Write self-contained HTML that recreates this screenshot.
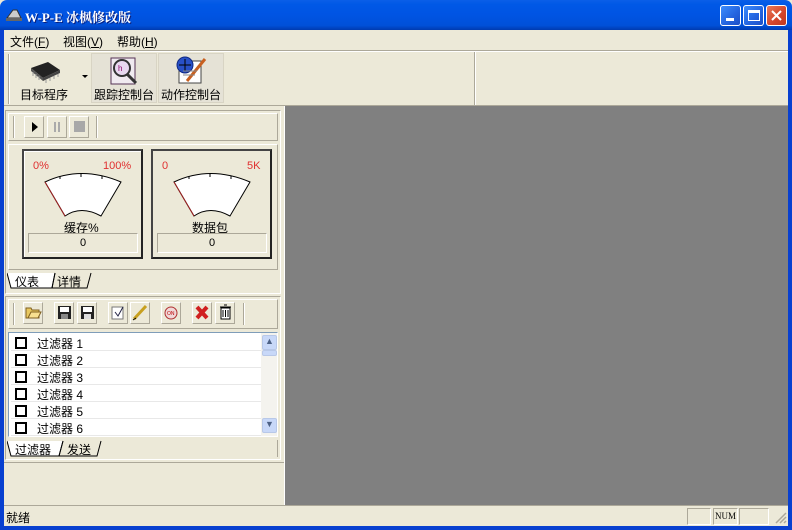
<!DOCTYPE html>
<html><head><meta charset="utf-8"><style>
*{margin:0;padding:0;box-sizing:border-box}
body{width:792px;height:530px;overflow:hidden;background:#ece9d8;font:12px "Liberation Sans","Noto Sans CJK SC",sans-serif;position:relative;color:#000}
.a{position:absolute}
.title{left:0;top:0;width:792px;height:30px;background:linear-gradient(#0a5fe8,#0058e6 15%,#0054e3 50%,#0050d8 85%,#003bb0);border-radius:7px 7px 0 0}
.tt{left:25px;top:7px;color:#fff;font-weight:bold;font-size:13px;font-family:"Liberation Serif","Noto Serif CJK SC",serif;text-shadow:1px 1px #0a1e7a}
.wb{top:5px;width:21px;height:21px;border:1px solid #fff;border-radius:3px;background:linear-gradient(135deg,#3c8cfc,#2463de 60%,#1d4fc6)}
.frL{left:0;top:30px;width:4px;height:500px;background:#0840d0}
.frR{left:788px;top:30px;width:4px;height:500px;background:#0840d0}
.frB{left:0;top:526px;width:792px;height:4px;background:#0840d0}
.menu span{position:absolute;top:33px}
.sunk{border:1px solid;border-color:#aca899 #fff #fff #aca899}
.rais{border:1px solid;border-color:#fff #aca899 #aca899 #fff}
.btn{position:absolute;width:20px;height:22px;border:1px solid;border-color:#fff #aca899 #aca899 #fff}
.row{position:absolute;left:2px;width:250px;height:17px;border-bottom:1px solid #e8e8e8}
.row i{position:absolute;left:4px;top:3px;width:12px;height:12px;border:2px solid #000}
.row b{position:absolute;left:26px;top:1px;font-weight:normal;font-size:12px}
.red{color:#e03030;font-size:11px}
</style></head><body>
<div class="a title"></div>
<svg class="a" style="left:5px;top:6px" width="18" height="16"><path d="M2 12 L8 4 L12 4 L16 12Z" fill="#ccc" stroke="#333"/><rect x="1" y="12" width="16" height="3" fill="#666"/></svg>
<div class="a tt">W-P-E 冰枫修改版</div>
<div class="a wb" style="left:720px"><div class="a" style="left:5px;top:12px;width:8px;height:3px;background:#fff"></div></div>
<div class="a wb" style="left:743px"><div class="a" style="left:4px;top:4px;width:12px;height:11px;border:1px solid #fff;border-top:3px solid #fff"></div></div>
<div class="a wb" style="left:766px;background:linear-gradient(135deg,#e87a5a,#d4452a 60%,#c03a20)"><svg width="19" height="19"><path d="M5 5L14 14M14 5L5 14" stroke="#fff" stroke-width="2"/></svg></div>
<div class="a frL"></div><div class="a frR"></div><div class="a frB"></div>
<div class="menu"><span style="left:10px">文件(<u>F</u>)</span><span style="left:63px">视图(<u>V</u>)</span><span style="left:117px">帮助(<u>H</u>)</span></div>
<div class="a" style="left:4px;top:50px;width:784px;height:1px;background:#aca899"></div>
<div class="a" style="left:4px;top:51px;width:784px;height:1px;background:#fff"></div>
<!-- toolbar -->
<div class="a" style="left:8px;top:54px;width:2px;height:50px;border-left:1px solid #aca899;border-right:1px solid #fff"></div>
<svg class="a" style="left:28px;top:58px" width="34" height="26"><path d="M3 10 L20 4 L32 12 L15 20Z" fill="#222"/><path d="M3 10 L15 20 L15 23 L3 13Z" fill="#555"/><path d="M15 20L32 12L32 15L15 23Z" fill="#444"/><g stroke="#999" stroke-width="1"><path d="M5 14v4M8 16v4M11 18v4M18 22v3M22 20v3M26 18v3M30 16v3"/></g></svg>
<div class="a" style="left:20px;top:86px">目标程序</div>
<div class="a" style="left:82px;top:75px;width:0;height:0;border:3px solid transparent;border-top:3px solid #000"></div>
<div class="a" style="left:91px;top:53px;width:66px;height:50px;background:#e5e2d6;border:1px solid #d8d4c4"></div>
<div class="a" style="left:158px;top:53px;width:66px;height:50px;background:#e5e2d6;border:1px solid #d8d4c4"></div>
<svg class="a" style="left:108px;top:55px" width="32" height="32"><rect x="3" y="3" width="24" height="26" fill="#f0eaf0" stroke="#553355"/><circle cx="14" cy="13" r="8" fill="#e8d8f0" stroke="#333" stroke-width="2"/><path d="M19 19L28 28" stroke="#333" stroke-width="3"/><text x="10" y="16" font-size="8" fill="#806">h</text></svg>
<div class="a" style="left:94px;top:86px">跟踪控制台</div>
<svg class="a" style="left:173px;top:55px" width="34" height="32"><rect x="6" y="6" width="22" height="22" fill="#fff" stroke="#444"/><circle cx="12" cy="10" r="8" fill="#2850c8" stroke="#102880"/><path d="M12 4v12M6 10h12" stroke="#000"/><path d="M14 26L32 4" stroke="#c86020" stroke-width="3"/><path d="M10 16h14M10 20h12" stroke="#888"/></svg>
<div class="a" style="left:161px;top:86px">动作控制台</div>
<div class="a" style="left:474px;top:52px;width:2px;height:54px;border-left:1px solid #aca899;border-right:1px solid #fff"></div>
<div class="a" style="left:4px;top:105px;width:784px;height:1px;background:#aca899"></div>
<!-- gray area -->
<div class="a" style="left:284px;top:106px;width:504px;height:400px;background:#808080;border-left:1px solid #fff"></div>
<!-- left panel 1 -->
<div class="a sunk" style="left:5px;top:110px;width:276px;height:184px"></div>
<div class="a rais" style="left:8px;top:113px;width:270px;height:28px"></div>
<div class="a" style="left:13px;top:116px;width:2px;height:22px;border-left:1px solid #aca899;border-right:1px solid #fff"></div>
<div class="btn" style="left:24px;top:116px"><div class="a" style="left:7px;top:5px;border:5px solid transparent;border-left:6px solid #000;border-right:0"></div></div>
<div class="btn" style="left:47px;top:116px"><div class="a" style="left:6px;top:5px;width:6px;height:10px;border-left:2px solid #aaa;border-right:2px solid #aaa"></div></div>
<div class="btn" style="left:69px;top:116px"><div class="a" style="left:4px;top:4px;width:11px;height:11px;background:#a8a8a8"></div></div>
<div class="a" style="left:96px;top:116px;width:2px;height:22px;border-left:1px solid #aca899;border-right:1px solid #fff"></div>
<div class="a rais" style="left:8px;top:144px;width:270px;height:126px"></div>
<!-- gauges -->
<div class="a" style="left:22px;top:149px;width:121px;height:110px;border:2px solid #333;border-color:#444 #222 #222 #444;box-shadow:1px 1px 0 #fff inset"></div>
<div class="a red" style="left:33px;top:160px">0%</div><div class="a red" style="left:103px;top:160px">100%</div>
<svg class="a" style="left:22px;top:149px" width="121" height="110"><path d="M23 33 Q59 16 99 33 L79 67 Q59 56 43 67Z" fill="#fff" stroke="#000"/><path d="M23 33L43 67" stroke="#a02020"/><path d="M38 27v3M59 24v4M80 27v3" stroke="#000"/></svg>
<div class="a" style="left:64px;top:219px">缓存%</div>
<div class="a sunk" style="left:28px;top:233px;width:110px;height:20px;text-align:center;line-height:18px;font-size:11px">0</div>
<div class="a" style="left:151px;top:149px;width:121px;height:110px;border:2px solid #333;border-color:#444 #222 #222 #444"></div>
<div class="a red" style="left:162px;top:160px">0</div><div class="a red" style="left:247px;top:160px">5K</div>
<svg class="a" style="left:151px;top:149px" width="121" height="110"><path d="M23 33 Q59 16 99 33 L79 67 Q59 56 43 67Z" fill="#fff" stroke="#000"/><path d="M23 33L43 67" stroke="#a02020"/><path d="M38 27v3M59 24v4M80 27v3" stroke="#000"/></svg>
<div class="a" style="left:192px;top:219px">数据包</div>
<div class="a sunk" style="left:157px;top:233px;width:110px;height:20px;text-align:center;line-height:18px;font-size:11px">0</div>
<svg class="a" style="left:7px;top:272px" width="90" height="18"><path d="M0 1 L4 16 L45 16 L48 1" fill="#fff" stroke="#000"/><path d="M45 16 L48 1 M45 16 L80 16 L84 1" fill="none" stroke="#000"/><text x="8" y="14" font-size="12" font-family="Noto Sans CJK SC">仪表</text><text x="50" y="14" font-size="12" font-family="Noto Sans CJK SC">详情</text></svg>
<!-- panel 2 -->
<div class="a sunk" style="left:5px;top:296px;width:276px;height:164px"></div>
<div class="a rais" style="left:8px;top:299px;width:270px;height:30px"></div>
<div class="a" style="left:13px;top:303px;width:2px;height:22px;border-left:1px solid #aca899;border-right:1px solid #fff"></div>
<div class="btn" style="left:23px;top:302px"><svg width="18" height="18"><path d="M2 5h5l1 2h7v8H2Z" fill="#e8c860" stroke="#806020"/><path d="M4 15l3-6h10l-3 6Z" fill="#f8e090" stroke="#806020"/></svg></div>
<div class="btn" style="left:54px;top:302px"><svg width="18" height="18"><rect x="3" y="3" width="13" height="13" fill="#222"/><rect x="5" y="4" width="9" height="5" fill="#fff"/><rect x="6" y="11" width="7" height="5" fill="#888"/></svg></div>
<div class="btn" style="left:77px;top:302px"><svg width="18" height="18"><rect x="3" y="3" width="13" height="13" fill="#222"/><rect x="5" y="4" width="9" height="5" fill="#fff"/><rect x="6" y="11" width="7" height="5" fill="#ddd"/></svg></div>
<div class="btn" style="left:108px;top:302px"><svg width="18" height="18"><rect x="3" y="4" width="11" height="12" fill="#fff" stroke="#777"/><path d="M6 9l3 4 5-9" stroke="#224" fill="none"/></svg></div>
<div class="btn" style="left:130px;top:302px"><svg width="18" height="18"><path d="M3 16L15 3" stroke="#c8a020" stroke-width="3"/><path d="M2 17l3-2" stroke="#000"/></svg></div>
<div class="btn" style="left:161px;top:302px"><svg width="18" height="18"><circle cx="9" cy="10" r="6" fill="#f0d8d8" stroke="#b03030"/><text x="5" y="12" font-size="5" fill="#b00">ON</text></svg></div>
<div class="btn" style="left:192px;top:302px"><svg width="18" height="18"><path d="M4 4L14 15M14 4L4 15" stroke="#d02020" stroke-width="4"/></svg></div>
<div class="btn" style="left:215px;top:302px"><svg width="18" height="18"><rect x="5" y="5" width="9" height="11" fill="#fff" stroke="#000"/><path d="M4 4h11M8 2h3M7 7v7M9.5 7v7M12 7v7" stroke="#000"/></svg></div>
<div class="a" style="left:243px;top:303px;width:2px;height:22px;border-left:1px solid #aca899;border-right:1px solid #fff"></div>
<div class="a" style="left:8px;top:332px;width:270px;height:105px;background:#fff;border:1px solid;border-color:#7f9db9 #fff #fff #7f9db9;overflow:hidden">
<div class="row" style="top:1px"><i></i><b>过滤器 1</b></div>
<div class="row" style="top:18px"><i></i><b>过滤器 2</b></div>
<div class="row" style="top:35px"><i></i><b>过滤器 3</b></div>
<div class="row" style="top:52px"><i></i><b>过滤器 4</b></div>
<div class="row" style="top:69px"><i></i><b>过滤器 5</b></div>
<div class="row" style="top:86px"><i></i><b>过滤器 6</b></div>
<div class="a" style="left:252px;top:0;width:17px;height:104px;background:#f4f3ee"></div>
<div class="a" style="left:253px;top:2px;width:15px;height:15px;border:1px solid #b8c8e8;border-radius:2px;background:#c8d8f8;text-align:center;font-size:9px;color:#4d6185">▲</div>
<div class="a" style="left:253px;top:17px;width:15px;height:6px;border:1px solid #b8c8e8;border-radius:2px;background:#c8d8f8"></div>
<div class="a" style="left:253px;top:85px;width:15px;height:15px;border:1px solid #b8c8e8;border-radius:2px;background:#c8d8f8;text-align:center;font-size:9px;color:#4d6185">▼</div>
</div>
<svg class="a" style="left:7px;top:440px" width="110" height="18"><path d="M0 1 L4 16 L52 16 L56 1" fill="#fff" stroke="#000"/><path d="M52 16 L56 1 M52 16 L90 16 L94 1" fill="none" stroke="#000"/><text x="8" y="14" font-size="12" font-family="Noto Sans CJK SC">过滤器</text><text x="60" y="14" font-size="12" font-family="Noto Sans CJK SC">发送</text></svg>
<div class="a" style="left:277px;top:440px;width:1px;height:17px;background:#aca899"></div>
<div class="a" style="left:4px;top:462px;width:280px;height:1px;background:#aca899"></div>
<!-- status -->
<div class="a" style="left:4px;top:505px;width:784px;height:1px;background:#aca899"></div>
<div class="a" style="left:6px;top:509px">就绪</div>
<div class="a sunk" style="left:687px;top:508px;width:24px;height:17px"></div>
<div class="a sunk" style="left:713px;top:508px;width:25px;height:17px;font-size:9px;font-family:'Liberation Serif',serif;text-align:center;line-height:15px">NUM</div>
<div class="a sunk" style="left:739px;top:508px;width:30px;height:17px"></div>
<svg class="a" style="left:774px;top:511px" width="13" height="13"><path d="M12 2L2 12M12 6L6 12M12 10L10 12" stroke="#aca899" stroke-width="1.5"/></svg>
</body></html>
